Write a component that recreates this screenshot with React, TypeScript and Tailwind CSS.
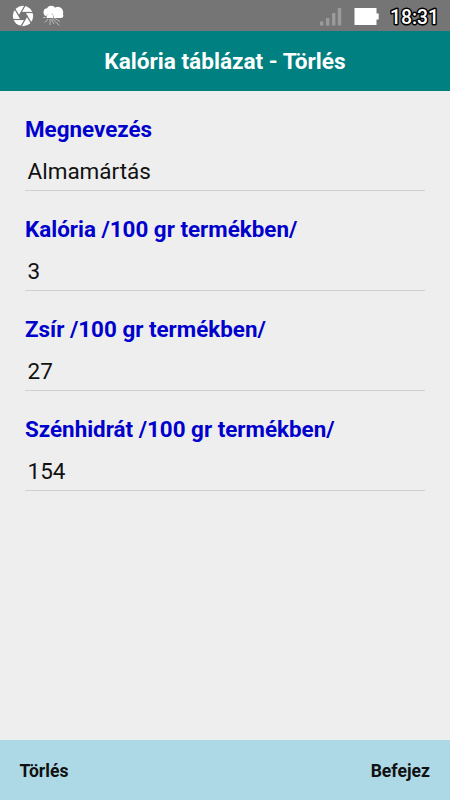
const fields = [
  { label: 'Megnevezés', value: 'Almamártás' },
  { label: 'Kalória /100 gr termékben/', value: '3' },
  { label: 'Zsír /100 gr termékben/', value: '27' },
  { label: 'Szénhidrát /100 gr termékben/', value: '154' },
];

const blades = [0, 60, 120, 180, 240, 300];

function ShutterIcon() {
  return (
    <svg width="22" height="22" viewBox="-11 -11 22 22">
      <circle r="10.2" fill="#fff" />
      <g transform="rotate(30)">
        <polygon points="0,-4 3.5,-2 3.5,2 0,4 -3.5,2 -3.5,-2" fill="#757575" />
        {blades.map((a) => (
          <path key={a} d="M-3.5 2L-3.5 -10" stroke="#757575" strokeWidth="1.2" transform={`rotate(${a})`} />
        ))}
      </g>
    </svg>
  );
}

function WeatherIcon() {
  return (
    <svg width="22" height="22" viewBox="0 0 22 22">
      <circle cx="4.5" cy="7.2" r="4" fill="#fff" />
      <circle cx="8.2" cy="4.8" r="4.1" fill="#fff" />
      <circle cx="14.8" cy="7.2" r="5.4" fill="#fff" />
      <rect x="9" y="8" width="11.3" height="5" rx="2.5" fill="#fff" />
      <path d="M3 13A4 4 0 1 1 11 13Z" fill="#757575" />
      <path d="M3.7 13A3.4 3.4 0 1 1 10.3 13Z" fill="#fff" />
      <path d="M7 14V20M5 14L2 17.5M9 13.5L16.5 20.5M8 14L11 19M2.8 12.5H0M11 13L17 16.5" stroke="#fff" strokeOpacity=".5" strokeWidth="1" />
    </svg>
  );
}

export default function App() {
  return (
    <div className="flex h-[800px] w-[450px] flex-col bg-[#eeeeee] font-[Roboto,sans-serif]">
      <div className="flex h-[31px] items-center justify-between bg-[#757575] pr-[10px] pl-[11.5px]">
        <div className="flex gap-[9px]">
          <ShutterIcon />
          <WeatherIcon />
        </div>
        <div className="flex items-center">
          <svg width="22" height="19" viewBox="0 0 22 19" fill="#9b9b9b" className="mt-[2px] mr-[12px]">
            <rect x="0" y="14.5" width="3.4" height="4" rx=".5" />
            <rect x="6" y="11" width="3.4" height="7.5" rx=".5" />
            <rect x="12" y="6" width="3.4" height="12.5" rx=".5" />
            <rect x="17.8" y="1" width="3.4" height="17.5" rx=".5" />
          </svg>
          <svg width="25" height="17" viewBox="0 0 25 17" fill="#fff" className="mt-px mr-[11px]">
            <path d="M.5 0H22.5V5.5H24.7V11.5H22.5V17H.5Z" />
          </svg>
          <svg width="50" height="26" viewBox="0 0 50 26">
            <text x="0" y="20.5" fontFamily="Roboto, sans-serif" fontSize="20" fontWeight="500" textLength="49" lengthAdjust="spacingAndGlyphs" fill="#fff" stroke="#000" strokeWidth="3" strokeLinejoin="round" paintOrder="stroke">18:31</text>
          </svg>
        </div>
      </div>
      <header className="flex h-[60px] items-center justify-center bg-[#008080] pt-[2px] text-[22.6px] font-bold text-white">Kalória táblázat - Törlés</header>
      <main className="flex-1 px-[25px] pt-[25px]">
        {fields.map((f) => (
          <div key={f.label} className="h-[100px]">
            <div className="h-[26px] text-[22.4px] leading-[26px] font-bold text-[#0000cd]">{f.label}</div>
            <div className="h-[49px] border-b border-[#d0d0d0] pt-[16px] pl-[2.5px] text-[22.5px] leading-[26px] text-[#111111]">{f.value}</div>
          </div>
        ))}
      </main>
      <footer className="flex h-[60px] items-center justify-between bg-[#add8e6] pt-[2px] pr-[20px] pl-[19.5px] text-[17.6px] font-bold text-[#111111]">
        <span>Törlés</span>
        <span>Befejez</span>
      </footer>
    </div>
  );
}
